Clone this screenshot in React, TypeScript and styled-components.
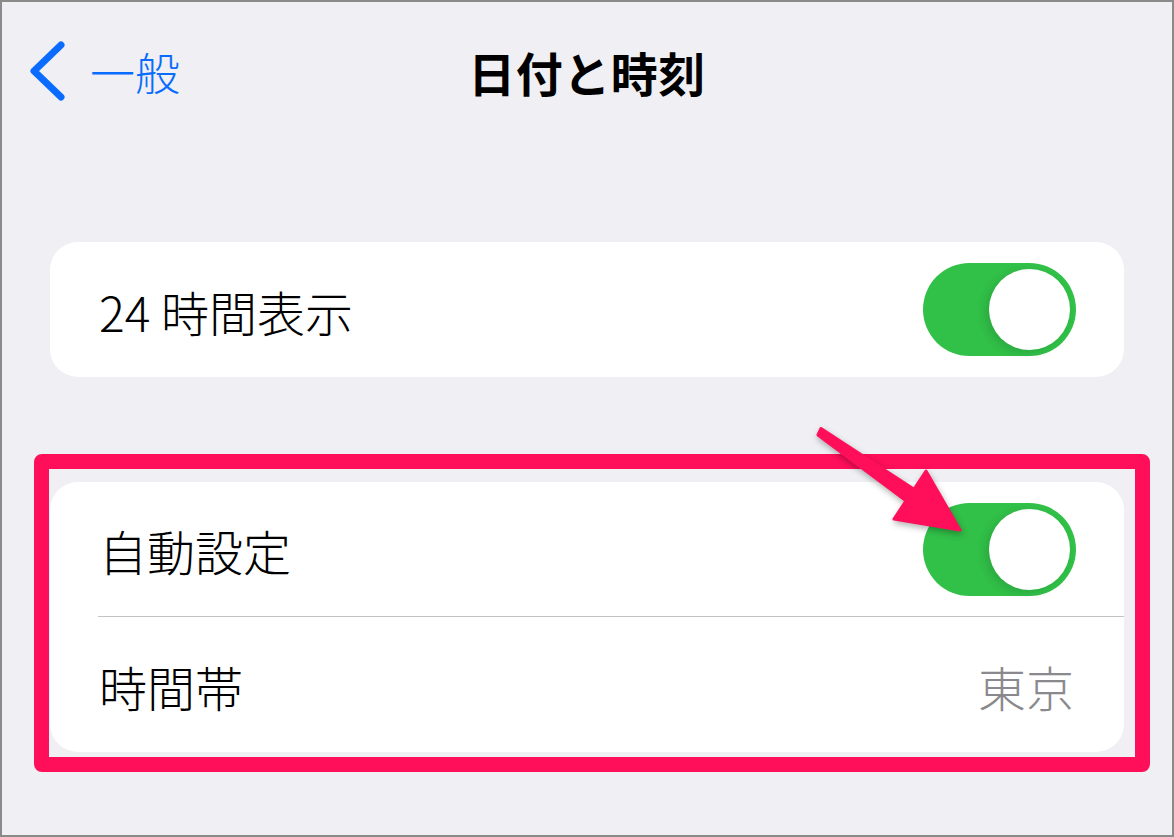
import styled, { createGlobalStyle } from "styled-components";

/**
 * Global
 */
const GlobalStyle = createGlobalStyle`
  html, body {
    margin: 0;
    padding: 0;
    background: #efeff4;
  }
  body {
    font-family: "Noto Sans CJK JP", "Noto Sans", sans-serif;
  }
`;

/**
 * Styled
 */
const Page = styled.div`
  position: relative;
  box-sizing: border-box;
  width: 1174px;
  height: 837px;
  border: 2px solid #8a8a8a;
  background: #efeff4;
  display: flex;
  flex-direction: column;
  overflow: hidden;
`;

const NavBar = styled.div`
  height: 138px;
  display: grid;
  grid-template-columns: 1fr auto 1fr;
  align-items: center;
`;

const BackButton = styled.div`
  display: flex;
  align-items: center;
  gap: 22px;
  padding-left: 26px;
  color: #0a6cfe;
  font-size: 45px;
  font-weight: 300;
  line-height: 1;
`;

const Title = styled.div`
  font-size: 47px;
  font-weight: 700;
  color: #000;
  line-height: 1;
  letter-spacing: 0.5px;
`;

const Content = styled.div`
  display: flex;
  flex-direction: column;
  gap: 105px;
  padding: 102px 48px 0;
`;

const Card = styled.div`
  background: #fff;
  border-radius: 28px;
  overflow: hidden;
`;

const Row = styled.div<{ $height: number }>`
  height: ${(p) => p.$height}px;
  display: flex;
  align-items: center;
  justify-content: space-between;
  padding: 2px 48px 0 49px;
  box-sizing: border-box;
`;

const Label = styled.span`
  font-size: 48px;
  font-weight: 300;
  color: #000;
  line-height: 1;
`;

const Value = styled.span`
  font-size: 48px;
  font-weight: 300;
  color: #8a8a8e;
  line-height: 1;
  padding-right: 2px;
`;

const Separator = styled.div`
  height: 1px;
  margin-left: 48px;
  background: #c3c3c6;
`;

const Toggle = styled.div<{ $on: boolean }>`
  position: relative;
  width: 153px;
  height: 93px;
  border-radius: 47px;
  background: ${(p) => (p.$on ? "#31c048" : "#e9e9eb")};
  margin-top: -2px;
`;

const Knob = styled.div`
  position: absolute;
  top: 6px;
  right: 6px;
  width: 81px;
  height: 81px;
  border-radius: 50%;
  background: #fff;
  box-shadow: -4px 3px 10px rgba(0, 0, 0, 0.12);
`;

const Highlight = styled.div`
  position: absolute;
  left: 32px;
  top: 452px;
  width: 1116px;
  height: 318px;
  box-sizing: border-box;
  border: 15px solid #ff0e5a;
  border-radius: 8px;
  pointer-events: none;
`;

const ArrowLayer = styled.svg`
  position: absolute;
  left: -2px;
  top: -2px;
  width: 1174px;
  height: 837px;
  pointer-events: none;
  filter: drop-shadow(1px 3px 3px rgba(0, 0, 0, 0.3));
`;

const Chevron = () => (
  <svg width="40" height="60" viewBox="0 0 40 60">
    <path
      d="M33 4 L6 30 L33 56"
      fill="none"
      stroke="#0a6cfe"
      strokeWidth="7"
      strokeLinecap="round"
      strokeLinejoin="round"
    />
  </svg>
);

const App = () => {
  return (
    <>
      <GlobalStyle />
      <Page>
        <NavBar>
          <BackButton>
            <Chevron />
            <span>一般</span>
          </BackButton>
          <Title>日付と時刻</Title>
          <div />
        </NavBar>
        <Content>
          <Card>
            <Row $height={135}>
              <Label>24 時間表示</Label>
              <Toggle $on>
                <Knob />
              </Toggle>
            </Row>
          </Card>
          <Card>
            <Row $height={134}>
              <Label>自動設定</Label>
              <Toggle $on>
                <Knob />
              </Toggle>
            </Row>
            <Separator />
            <Row $height={135}>
              <Label>時間帯</Label>
              <Value>東京</Value>
            </Row>
          </Card>
        </Content>
        <Highlight />
        <ArrowLayer viewBox="0 0 1174 837">
          <polygon
            points="821,428.5 914,489.3 926,471 960,530 894,519 906,500.7 818,435"
            fill="#ff0e5a"
            stroke="#ff0e5a"
            strokeWidth="3"
            strokeLinejoin="round"
          />
        </ArrowLayer>
      </Page>
    </>
  );
};

export default App;
